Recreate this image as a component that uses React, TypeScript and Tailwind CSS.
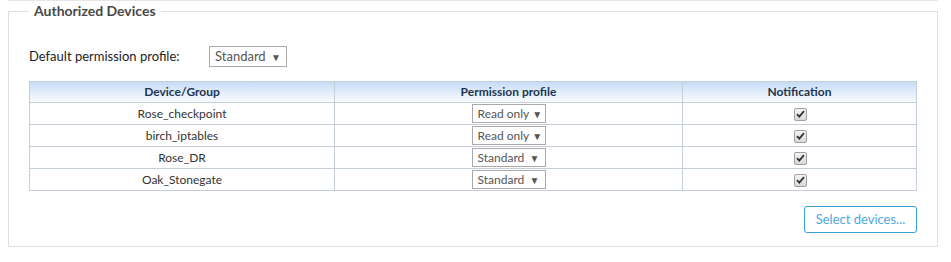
const devices = [
  { name: "Rose_checkpoint", profile: "Read only" },
  { name: "birch_iptables", profile: "Read only" },
  { name: "Rose_DR", profile: "Standard" },
  { name: "Oak_Stonegate", profile: "Standard" },
];

const FakeSelect = ({ value, className }: { value: string; className: string }) => (
  <div
    className={`inline-flex items-center justify-between whitespace-nowrap border border-[#a9a9a9] bg-white pl-[5px] pr-[5px] text-[#555] ${className}`}
  >
    <span>{value}</span>
    <span className="text-[10px] leading-none text-[#555]">▼</span>
  </div>
);

const CheckMark = () => (
  <span className="inline-flex h-[13px] w-[13px] items-center justify-center rounded-[2px] border border-[#a0a0a0] bg-gradient-to-b from-[#f4f4f4] to-[#d8d8d8]">
    <svg width="9" height="8" viewBox="0 0 9 8">
      <path d="M1 4.2 L3.3 6.6 L8 1.2" fill="none" stroke="#333" strokeWidth="1.8" />
    </svg>
  </span>
);

export default function App() {
  return (
    <div className="h-[262px] w-[951px] bg-white font-['Lato',sans-serif] text-[13px] text-[#333]">
      <div className="ml-[8px] h-px w-[930px] bg-[#e6e6e6]" />
      <fieldset className="mx-[8px] mt-[1px] h-[245px] w-[930px] border border-[#dedede] px-[20px] pb-[15px]">
        <legend className="ml-[0px] px-[5px] text-[14px] font-bold leading-[18px] text-[#484848]">
          Authorized Devices
        </legend>

        <div className="mt-[26px] flex items-center">
          <span className="w-[180px] text-[#222]">Default permission profile:</span>
          <FakeSelect value="Standard" className="h-[21px] w-[78px] text-[13px]" />
        </div>

        <table className="mt-[14px] w-[888px] border-collapse text-[12px]">
          <thead>
            <tr className="h-[21px] bg-gradient-to-b from-[#c6dcf6] to-[#fdfeff]">
              <th className="w-[305px] border border-[#c3ced9] font-bold text-[#1e3550]">Device/Group</th>
              <th className="w-[348px] border border-[#c3ced9] font-bold text-[#1e3550]">Permission profile</th>
              <th className="border border-[#c3ced9] font-bold text-[#1e3550]">Notification</th>
            </tr>
          </thead>
          <tbody>
            {devices.map((d) => (
              <tr key={d.name} className="h-[22px]">
                <td className="border border-[#c3ced9] text-center text-[#333]">{d.name}</td>
                <td className="border border-[#c3ced9] text-center">
                  <FakeSelect value={d.profile} className="h-[19px] w-[74px] gap-[3px] align-middle text-[12px]" />
                </td>
                <td className="border border-[#c3ced9] text-center">
                  <span className="inline-flex align-middle pl-[2px]">
                    <CheckMark />
                  </span>
                </td>
              </tr>
            ))}
          </tbody>
        </table>

        <div className="mt-[15px] flex justify-end">
          <button className="h-[27px] w-[113px] rounded-[3px] border border-[#3aa3dc] bg-white text-[13px] text-[#4ea8de]">
            Select devices...
          </button>
        </div>
      </fieldset>
    </div>
  );
}
